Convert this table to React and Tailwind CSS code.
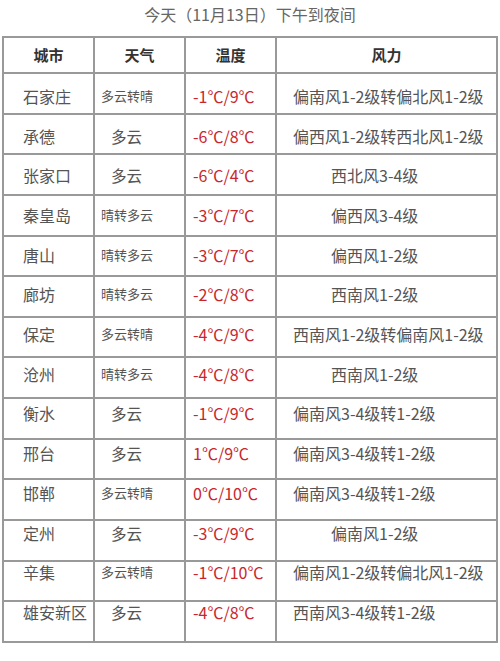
import React from 'react';

const rows = [
  { city: '石家庄', weather: '多云转晴', temp: '-1℃/9℃', wind: '偏南风1-2级转偏北风1-2级' },
  { city: '承德', weather: '多云', temp: '-6℃/8℃', wind: '偏西风1-2级转西北风1-2级' },
  { city: '张家口', weather: '多云', temp: '-6℃/4℃', wind: '西北风3-4级' },
  { city: '秦皇岛', weather: '晴转多云', temp: '-3℃/7℃', wind: '偏西风3-4级' },
  { city: '唐山', weather: '晴转多云', temp: '-3℃/7℃', wind: '偏西风1-2级' },
  { city: '廊坊', weather: '晴转多云', temp: '-2℃/8℃', wind: '西南风1-2级' },
  { city: '保定', weather: '多云转晴', temp: '-4℃/9℃', wind: '西南风1-2级转偏南风1-2级' },
  { city: '沧州', weather: '晴转多云', temp: '-4℃/8℃', wind: '西南风1-2级' },
  { city: '衡水', weather: '多云', temp: '-1℃/9℃', wind: '偏南风3-4级转1-2级' },
  { city: '邢台', weather: '多云', temp: '1℃/9℃', wind: '偏南风3-4级转1-2级' },
  { city: '邯郸', weather: '多云转晴', temp: '0℃/10℃', wind: '偏南风3-4级转1-2级' },
  { city: '定州', weather: '多云', temp: '-3℃/9℃', wind: '偏南风1-2级' },
  { city: '辛集', weather: '多云转晴', temp: '-1℃/10℃', wind: '偏南风1-2级转偏北风1-2级' },
  { city: '雄安新区', weather: '多云', temp: '-4℃/8℃', wind: '西南风3-4级转1-2级' },
];

export default function App() {
  return (
    <div className="w-[500px] h-[661px] bg-white text-[#555] font-['Noto_Sans_CJK_SC','Noto_Sans',sans-serif]">
      <div className="h-[36px] pt-[3px] text-center text-[16px] leading-[22px] text-[#666]">
        今天（11月13日）下午到夜间
      </div>
      <div className="mx-[2px] w-[496px] border-l-2 border-r-2 border-t-2 border-[#999]">
        <div className="flex h-[36px] border-b-2 border-[#999] font-bold text-[15px] text-[#333]">
          <div className="w-[91px] shrink-0 flex items-center justify-center border-r-2 border-[#999]">城市</div>
          <div className="w-[91px] shrink-0 flex items-center justify-center border-r-2 border-[#999]">天气</div>
          <div className="w-[91px] shrink-0 flex items-center justify-center border-r-2 border-[#999]">温度</div>
          <div className="flex-1 flex items-center justify-center">风力</div>
        </div>
        {rows.map((r, i) => {
          // text drifts upward inside the cells row by row
          const pad = { paddingTop: Math.max(0, 12 - 0.94 * i) };
          const long = r.wind.length > 8;
          return (
            <div key={i} className="flex h-[40.64px] border-b-2 border-[#999] leading-[20px]">
              <div className="w-[91px] shrink-0 border-r-2 border-[#999] pl-[19px] text-[16px] text-[#555]" style={pad}>
                {r.city}
              </div>
              <div
                className={
                  r.weather.length > 2
                    ? 'w-[91px] shrink-0 border-r-2 border-[#999] pl-[6px] text-[13px] text-[#555]'
                    : 'w-[91px] shrink-0 border-r-2 border-[#999] pl-[16px] text-[15.5px] text-[#555]'
                }
                style={pad}
              >
                {r.weather}
              </div>
              <div className="w-[91px] shrink-0 border-r-2 border-[#999] pl-[7px] text-[16px] text-[#c9262c]" style={pad}>
                {r.temp}
              </div>
              <div
                className={
                  long
                    ? 'flex-1 pl-[16px] text-[16px] text-[#555] whitespace-nowrap'
                    : 'flex-1 pl-[54px] text-[16px] text-[#555] whitespace-nowrap'
                }
                style={pad}
              >
                {r.wind}
              </div>
            </div>
          );
        })}
      </div>
    </div>
  );
}
